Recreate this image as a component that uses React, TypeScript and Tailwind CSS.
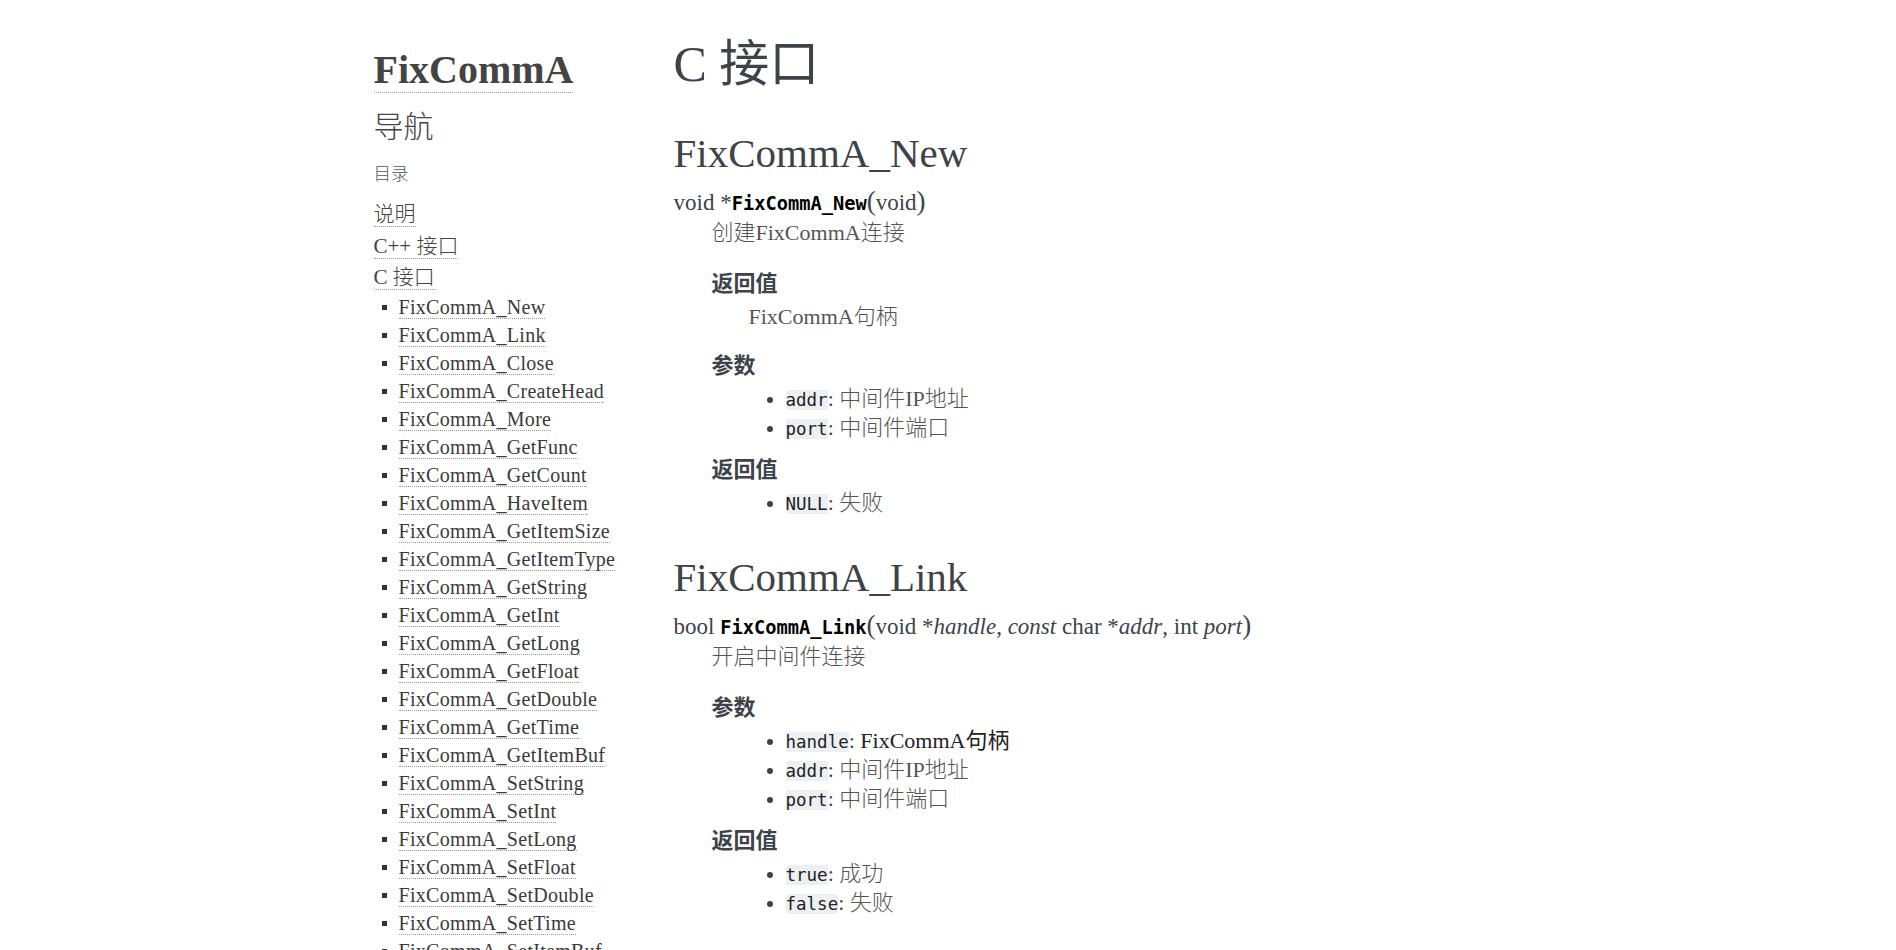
import React from "react"

const serif = "font-['Liberation_Serif','Noto_Sans_CJK_SC',serif]"
const mono = "font-['DejaVu_Sans_Mono',monospace]"

const navItems = [
  "FixCommA_New",
  "FixCommA_Link",
  "FixCommA_Close",
  "FixCommA_CreateHead",
  "FixCommA_More",
  "FixCommA_GetFunc",
  "FixCommA_GetCount",
  "FixCommA_HaveItem",
  "FixCommA_GetItemSize",
  "FixCommA_GetItemType",
  "FixCommA_GetString",
  "FixCommA_GetInt",
  "FixCommA_GetLong",
  "FixCommA_GetFloat",
  "FixCommA_GetDouble",
  "FixCommA_GetTime",
  "FixCommA_GetItemBuf",
  "FixCommA_SetString",
  "FixCommA_SetInt",
  "FixCommA_SetLong",
  "FixCommA_SetFloat",
  "FixCommA_SetDouble",
  "FixCommA_SetTime",
  "FixCommA_SetItemBuf",
  "FixCommA_Send",
]

function Code({ children }: { children: React.ReactNode }) {
  return <code className={`${mono} bg-[#ecf0f3] text-[17.5px] text-[#222]`}>{children}</code>
}

function Item({ code, text, dark }: { code: string; text: string; dark?: boolean }) {
  return (
    <li className="flex h-[29px] items-center pl-[55px]">
      <span className="mr-[13px] h-[6px] w-[6px] rounded-full bg-[#3e4349]" />
      <span>
        <Code>{code}</Code>: <span className={dark ? "text-[#222]" : "font-light text-[#555]"}>{text}</span>
      </span>
    </li>
  )
}

function Sidebar() {
  return (
    <aside className={`${serif} w-[275px] shrink-0 pl-[13px] pt-[48px] text-[#444]`}>
      <div className="leading-[44px]">
        <a className="inline-block border-b border-dotted border-[#999] text-[40px] font-bold text-[#444]">
          FixCommA
        </a>
      </div>
      <h3 className="mt-[9px] text-[30px] font-light leading-[36px]">导航</h3>
      <p className="mt-[16px] text-[17.5px] font-light leading-[26px] text-[#555]">目录</p>
      <ul className="mt-[12px] text-[21px] leading-[31.5px]">
        <li>
          <a className="border-b border-dotted border-[#999] font-light">说明</a>
        </li>
        <li>
          <a className="border-b border-dotted border-[#999] font-light">C++ 接口</a>
        </li>
        <li>
          <a className="border-b border-dotted border-[#999] font-light">C 接口</a>
        </li>
      </ul>
      <ul className="text-[20px] tracking-[0.3px]">
        {navItems.map((name) => (
          <li key={name} className="flex h-[28px] items-center">
            <span className="ml-[8px] mr-[12px] h-[5px] w-[5px] bg-[#333]" />
            <a className="border-b border-dotted border-[#999] leading-[22px] text-[#3a3a3a]">{name}</a>
          </li>
        ))}
      </ul>
    </aside>
  )
}

export default function App() {
  return (
    <div className="h-[950px] overflow-hidden bg-white">
      <div className="mx-auto flex w-[1175px]">
        <Sidebar />
        <main className={`${serif} flex-1 pl-[38px] pt-[34px] text-[#3e4349]`}>
          <h1 className="text-[50px] leading-[60px]">C 接口</h1>

          <h2 className="mt-[36px] text-[41px] leading-[46px]">FixCommA_New</h2>
          <div className="mt-[12px] h-[30px] text-[23px] leading-[30px]">
            void *<span className={`${mono} text-[18.7px] font-bold text-[#000]`}>FixCommA_New</span>
            <span className="text-[27px] leading-[20px]">(</span>void<span className="text-[27px] leading-[20px]">)</span>
          </div>
          <div className="pl-[38px] text-[22px] leading-[30px]">
            <p className="font-light text-[#555]">创建FixCommA连接</p>
            <p className="mt-[21px] font-bold">返回值</p>
            <p className="mt-[3px] pl-[37px] font-light text-[#555]">FixCommA句柄</p>
            <p className="mt-[19px] font-bold">参数</p>
            <ul className="mt-[4px]">
              <Item code="addr" text="中间件IP地址" />
              <Item code="port" text="中间件端口" />
            </ul>
            <p className="mt-[12px] font-bold">返回值</p>
            <ul className="mt-[4px]">
              <Item code="NULL" text="失败" />
            </ul>
          </div>

          <h2 className="mt-[36px] text-[41px] leading-[46px]">FixCommA_Link</h2>
          <div className="mt-[12px] h-[30px] text-[23px] leading-[30px]">
            bool <span className={`${mono} text-[18.7px] font-bold text-[#000]`}>FixCommA_Link</span>
            <span className="text-[27px] leading-[20px]">(</span>void *<em>handle</em>, <em>const</em> char *<em>addr</em>, int{" "}
            <em>port</em>
            <span className="text-[27px] leading-[20px]">)</span>
          </div>
          <div className="pl-[38px] text-[22px] leading-[30px]">
            <p className="font-light text-[#555]">开启中间件连接</p>
            <p className="mt-[21px] font-bold">参数</p>
            <ul className="mt-[4px]">
              <Item code="handle" text="FixCommA句柄" dark />
              <Item code="addr" text="中间件IP地址" />
              <Item code="port" text="中间件端口" />
            </ul>
            <p className="mt-[12px] font-bold">返回值</p>
            <ul className="mt-[4px]">
              <Item code="true" text="成功" />
              <Item code="false" text="失败" />
            </ul>
          </div>
        </main>
      </div>
    </div>
  )
}
